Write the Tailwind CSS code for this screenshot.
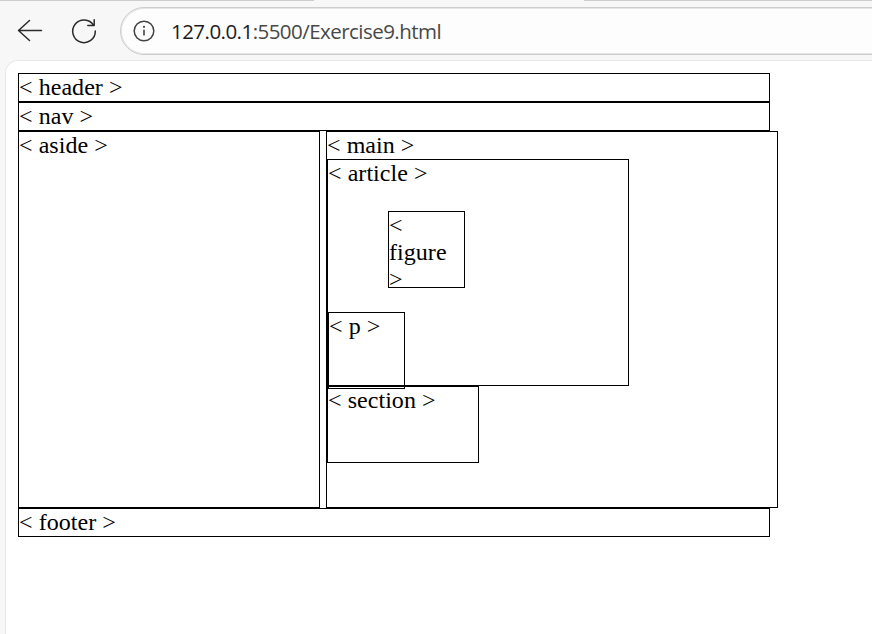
<!DOCTYPE html>
<html lang="en">
<head>
<meta charset="utf-8">
<title>Exercise 9</title>
<script src="https://cdn.jsdelivr.net/npm/@tailwindcss/browser@4"></script>
</head>
<body class="h-[634px] w-[872px] overflow-hidden bg-[#f7f7f7] flex flex-col">
<div class="flex h-px shrink-0 justify-between"><div class="w-[314px] bg-[#cccccc]"></div><div class="w-[288px] bg-[#cccccc]"></div></div>
<div class="flex h-[59px] shrink-0 items-start overflow-hidden pt-[6px]">
  <svg class="ml-[16px] mt-[10px] h-7 w-7 shrink-0" viewBox="0 0 28 28" fill="none" stroke="#2b2b2b" stroke-width="1.5" stroke-linecap="round" stroke-linejoin="round"><path d="M25.5 13.5H2.5M13.5 3.5L2.5 13.5L13.5 23.5"/></svg>
  <svg class="ml-[26px] mt-[10px] h-7 w-7 shrink-0" viewBox="0 0 28 28" fill="none" stroke="#2b2b2b" stroke-width="1.5" stroke-linecap="round" stroke-linejoin="round"><path d="M25.3 14A11.3 11.3 0 1 1 23.6 8.3M24.2 2.7V8.6H17.8"/></svg>
  <div class="ml-[22px] flex h-12 w-[800px] shrink-0 items-center rounded-l-full border border-[#cccccc] bg-[#fdfdfd] pl-3 inset-ring inset-ring-[#e6e6e6]">
    <svg class="h-[22px] w-[22px] shrink-0" viewBox="0 0 22 22" fill="none" stroke="#444" stroke-width="1.5"><circle cx="11" cy="11" r="9.8"/><path d="M11 9.7V15.5" stroke-width="1.6"/><circle cx="11" cy="6.8" r="1.1" fill="#444" stroke="none"/></svg>
    <div class="ml-4 whitespace-nowrap font-['Open_Sans',sans-serif] text-[20.5px] leading-7 tracking-[-0.54px] text-[#484848]"><span class="text-[#1b1b1b]">127.0.0.1</span>:5500/Exercise9.html</div>
  </div>
</div>
<div class="ml-[5px] min-h-0 flex-1 rounded-tl-[13px] border-l border-t border-[#e8e8e8] bg-white pl-[12px] pt-[12px] font-['Liberation_Serif',serif] text-[24px] leading-[27px] tracking-[0.05px] text-black">
  <header class="h-[29px] w-[752px] border border-black">&lt; header &gt;</header>
  <nav class="h-[29px] w-[752px] border border-black">&lt; nav &gt;</nav>
  <div class="flex h-[377px] gap-[6px]">
    <aside class="w-[302px] shrink-0 border border-black">&lt; aside &gt;</aside>
    <main class="w-[452px] shrink-0 border border-black">
      &lt; main &gt;
      <article class="h-[227px] w-[302px] border border-black">
        &lt; article &gt;
        <figure class="mb-6 ml-[60px] mt-6 h-[77px] w-[77px] border border-black">&lt; figure &gt;</figure>
        <p class="h-[77px] w-[77px] border border-black">&lt; p &gt;</p>
      </article>
      <section class="h-[77px] w-[152px] border border-black">&lt; section &gt;</section>
    </main>
  </div>
  <footer class="h-[29px] w-[752px] border border-black">&lt; footer &gt;</footer>
</div>
</body>
</html>
